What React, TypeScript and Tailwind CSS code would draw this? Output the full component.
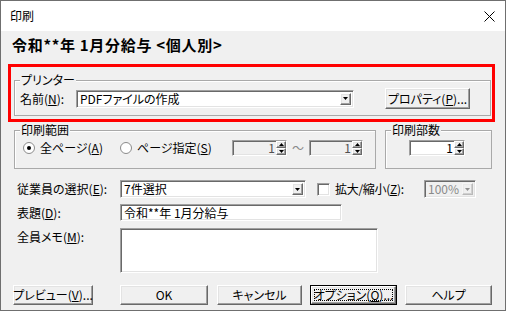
import React from 'react';

// classic win32 bevels
const sunken =
  'border border-t-[#a0a0a0] border-l-[#a0a0a0] border-b-white border-r-white shadow-[inset_1px_1px_0_#696969,inset_-1px_-1px_0_#e3e3e3]';
const raised =
  'border border-t-white border-l-white border-b-[#696969] border-r-[#696969] shadow-[inset_-1px_-1px_0_#a0a0a0,inset_1px_1px_0_#e3e3e3]';

const Arrow = ({ up = false }: { up?: boolean }) => (
  <svg width="5" height="3" viewBox="0 0 5 3">
    <path d={up ? 'M2.5 0L5 3H0z' : 'M0 0h5L2.5 3z'} fill="#000" />
  </svg>
);

const DropButton = ({ disabled = false }: { disabled?: boolean }) => (
  <div className={`w-[11px] h-[12px] bg-[#f0f0f0] flex items-center justify-center shrink-0 ${raised} ${disabled ? 'opacity-40' : ''}`}>
    <Arrow />
  </div>
);

const Combo = ({ text, className, disabled = false }: { text: string; className: string; disabled?: boolean }) => (
  <div className={`flex items-center justify-between pl-[3px] pr-[2px] ${sunken} ${disabled ? 'bg-[#f0f0f0] text-[#8a8a8a]' : 'bg-white'} ${className}`}>
    <span>{text}</span>
    <DropButton disabled={disabled} />
  </div>
);

const Spin = ({ className, disabled = false }: { className: string; disabled?: boolean }) => (
  <div className={`flex h-[16px] ${sunken} ${disabled ? 'bg-[#f0f0f0] text-[#505050]' : 'bg-white'} ${className}`}>
    <span className="flex-1 text-right pr-[1px] leading-[14px]">1</span>
    <div className="w-[10px] flex flex-col">
      <div className={`flex-1 bg-[#f0f0f0] flex items-center justify-center ${raised}`}>
        <Arrow up />
      </div>
      <div className={`flex-1 bg-[#f0f0f0] flex items-center justify-center ${raised}`}>
        <Arrow />
      </div>
    </div>
  </div>
);

const GroupBox = ({ label, className, children }: { label: string; className: string; children: React.ReactNode }) => (
  <div className={`relative border border-[#a9a9a9] shadow-[inset_1px_1px_0_#ffffff] ${className}`}>
    <span className="absolute -top-[8px] left-[5px] bg-[#f0f0f0] px-[1px] leading-[14px] whitespace-nowrap">{label}</span>
    {children}
  </div>
);

const Radio = ({ checked }: { checked: boolean }) => (
  <svg width="12" height="12" viewBox="0 0 12 12" className="shrink-0">
    <circle cx="6" cy="6" r="5.5" fill="#fff" stroke="#8a8a8a" />
    {checked && <circle cx="6" cy="6" r="2" fill="#000" />}
  </svg>
);

const Button = ({ children, className }: { children: React.ReactNode; className: string }) => (
  <div className={`h-[20px] bg-[#f0f0f0] flex items-center justify-center whitespace-nowrap ${raised} ${className}`}>{children}</div>
);

export default function App() {
  return (
    <div className="w-[506px] h-[311px] border border-[#6f6f6f] flex flex-col bg-[#f0f0f0] text-[12px] leading-[14px] text-black whitespace-nowrap [font-feature-settings:'palt'] font-['Noto_Sans_CJK_JP','Liberation_Sans',sans-serif]">
      <div className="h-[30px] shrink-0 bg-white flex items-center justify-between pl-[9px] pr-[10px]">
        <span>印刷</span>
        <svg width="11" height="11" viewBox="0 0 11 11">
          <path d="M0.5 0.5l10 10M10.5 0.5l-10 10" stroke="#000" strokeWidth="1" />
        </svg>
      </div>

      <div className="flex-1 flex flex-col">
        <h1 className="mt-[5px] ml-[11px] text-[15px] leading-[18px] font-bold tracking-[0.7px] [font-feature-settings:normal]">
          令和**年 1月分給与 &lt;個人別&gt;
        </h1>

        <div className="mt-[10px] ml-[7px] w-[487px] h-[58px] border-[3px] border-[#ff0000]">
          <GroupBox label="プリンター" className="mt-[13px] ml-[3px] w-[477px] h-[36px] pt-[7px] pl-[5px]">
            <div className="flex items-center h-[21px]">
              <span className="w-[56px]">
                名前(<u>N</u>):
              </span>
              <Combo text="PDFファイルの作成" className="w-[278px] h-[18px]" />
              <Button className="ml-[31px] w-[85px] h-[21px]">
                プロパティ(<u>P</u>)...
              </Button>
            </div>
          </GroupBox>
        </div>

        <div className="mt-[8px] ml-[13px] flex">
          <GroupBox label="印刷範囲" className="w-[362px] h-[39px] pt-[9px] pl-[8px]">
            <div className="flex items-center h-[16px]">
              <div className="w-[97px] flex items-center gap-[5px]">
                <Radio checked />
                <span>
                  全ページ(<u>A</u>)
                </span>
              </div>
              <div className="w-[112px] flex items-center gap-[5px]">
                <Radio checked={false} />
                <span>
                  ページ指定(<u>S</u>)
                </span>
              </div>
              <Spin className="w-[55px]" disabled />
              <span className="w-[22px] text-center text-[#8a8a8a]">～</span>
              <Spin className="w-[54px]" disabled />
            </div>
          </GroupBox>
          <GroupBox label="印刷部数" className="ml-[9px] w-[107px] h-[39px] pt-[9px] pl-[23px]">
            <Spin className="w-[56px]" />
          </GroupBox>
        </div>

        <div className="mt-[11px] ml-[16px] flex items-center h-[18px]">
          <span className="w-[103px]">
            従業員の選択(<u>E</u>):
          </span>
          <Combo text="7件選択" className="w-[186px] h-[18px]" />
          <div className={`ml-[11px] w-[13px] h-[13px] bg-white ${sunken}`} />
          <span className="ml-[5px] w-[89px] tracking-[-0.3px]">
            拡大/縮小(<u>Z</u>):
          </span>
          <Combo text="100%" className="w-[52px] h-[18px]" disabled />
        </div>

        <div className="mt-[6px] ml-[16px] flex items-center h-[17px]">
          <span className="w-[103px]">
            表題(<u>D</u>):
          </span>
          <div className={`w-[222px] h-[17px] bg-white pl-[3px] flex items-center ${sunken}`}>令和**年 1月分給与</div>
        </div>

        <div className="mt-[7px] ml-[16px] flex items-start">
          <span className="w-[103px] pt-[2px]">
            全員メモ(<u>M</u>):
          </span>
          <div className={`w-[258px] h-[45px] bg-white ${sunken}`} />
        </div>

        <div className="mt-[12px] ml-[12px] flex">
          <Button className="w-[80px]">
            プレビュー(<u>V</u>)...
          </Button>
          <Button className="ml-[27px] w-[88px]">OK</Button>
          <Button className="ml-[9px] w-[85px]">キャンセル</Button>
          <div className="ml-[8px] w-[87px] h-[20px] border border-black">
            <div className={`h-full bg-[#f0f0f0] p-[2px] ${raised}`}>
              <div className="w-full h-full border border-dotted border-black flex items-center justify-center">
                オプション(<u>O</u>)...
              </div>
            </div>
          </div>
          <Button className="ml-[8px] w-[87px]">ヘルプ</Button>
        </div>
      </div>
    </div>
  );
}
